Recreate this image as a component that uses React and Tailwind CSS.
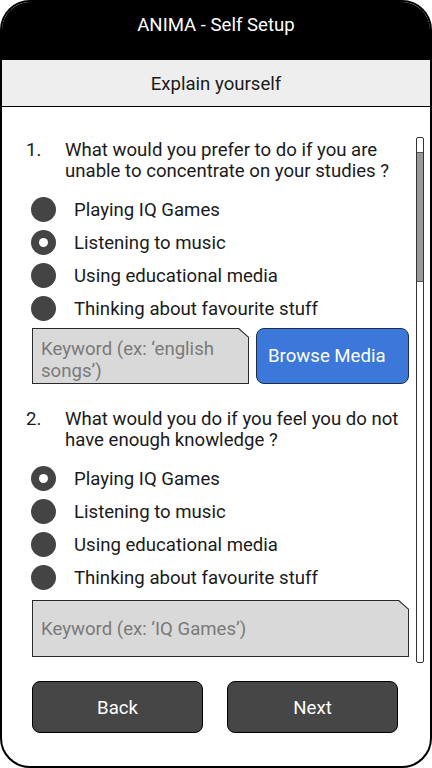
const questions = [
  {
    num: "1.",
    lines: ["What would you prefer to do if you are", "unable to concentrate on your studies ?"],
    selected: 1,
  },
  {
    num: "2.",
    lines: ["What would you do if you feel you do not", "have enough knowledge ?"],
    selected: 0,
  },
]

const options = [
  "Playing IQ Games",
  "Listening to music",
  "Using educational media",
  "Thinking about favourite stuff",
]

const Radio = ({ checked, label }) => (
  <div className="flex items-center h-[33px] pl-[29px]">
    <span className="w-[25px] h-[25px] rounded-full bg-[#444444] flex items-center justify-center">
      {checked && <span className="w-[9px] h-[9px] rounded-full bg-white" />}
    </span>
    <span className="ml-[18px] pt-[2px]">{label}</span>
  </div>
)

const KeywordBox = ({ className = "", children }) => (
  <div
    className={`bg-[#2a2a2a] p-px [clip-path:polygon(0_0,calc(100%_-_10px)_0,100%_9px,100%_100%,0_100%)] ${className}`}
  >
    <div className="h-full bg-[#d9d9d9] text-[#7a7a7a] [clip-path:polygon(0_0,calc(100%_-_9.6px)_0,100%_8.6px,100%_100%,0_100%)]">
      {children}
    </div>
  </div>
)

const Question = ({ q }) => (
  <div>
    <div className="flex pl-[24px] pt-px leading-[21px]">
      <span className="w-[39px]">{q.num}</span>
      <p>
        {q.lines[0]}
        <br />
        {q.lines[1]}
      </p>
    </div>
    <div className="mt-[11px]">
      {options.map((o, i) => (
        <Radio key={o} label={o} checked={i === q.selected} />
      ))}
    </div>
  </div>
)

export default function App() {
  return (
    <div
      className="w-[432px] h-[768px] border-2 border-black rounded-[30px] overflow-hidden bg-white flex flex-col text-[18.6px] text-[#1a1a1a]"
      style={{ fontFamily: "Roboto, 'Noto Sans', sans-serif" }}
    >
      <div className="h-[58px] bg-black text-white flex justify-center pt-[13px] leading-[21px]">
        ANIMA - Self Setup
      </div>
      <div className="h-[47px] bg-[#eeeeee] border-b border-black flex items-center justify-center pt-[4px]">
        Explain yourself
      </div>

      <div className="h-[561px] flex">
        <div className="flex-1 pt-[32px]">
          <Question q={questions[0]} />
          <div className="flex mt-[3px] pl-[30px] gap-[7px]">
            <KeywordBox className="w-[217px] h-[56px]">
              <div className="pl-[8px] pt-[9px] leading-[22px]">
                Keyword (ex: ‘english
                <br />
                songs’)
              </div>
            </KeywordBox>
            <button className="w-[153px] h-[56px] rounded-[8px] bg-[#3b78d9] border border-[#1d2f4d] text-white text-left pl-[11px] pt-[2px]">
              Browse Media
            </button>
          </div>

          <div className="mt-[24px]">
            <Question q={questions[1]} />
          </div>
          <KeywordBox className="mt-[6px] ml-[30px] w-[377px] h-[57px]">
            <div className="h-full flex items-center pl-[8px] pt-[3px]">Keyword (ex: ‘IQ Games’)</div>
          </KeywordBox>
        </div>

        <div className="pt-[30px] pb-[5px] pr-[6px]">
          <div className="w-[8px] h-full border border-[#333333] rounded-[2px] bg-white flex flex-col">
            <div className="h-[14px]" />
            <div className="h-[130px] bg-[#9a9a9a] border-y border-[#555555]" />
          </div>
        </div>
      </div>

      <div className="flex gap-[24px] px-[30px] pt-[13px]">
        <button className="w-[171px] h-[52px] rounded-[8px] bg-[#464646] border border-black text-white pt-[3px]">
          Back
        </button>
        <button className="w-[171px] h-[52px] rounded-[8px] bg-[#464646] border border-black text-white pt-[3px]">
          Next
        </button>
      </div>
    </div>
  )
}
